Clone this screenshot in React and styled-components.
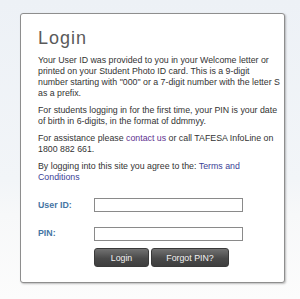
import React from "react";
import styled, { createGlobalStyle } from "styled-components";

const GlobalStyle = createGlobalStyle`
  html, body {
    margin: 0;
    padding: 0;
  }
  body {
    font-family: "Liberation Sans", Arial, sans-serif;
    background: #fff;
  }
`;

const Page = styled.div`
  width: 300px;
  height: 299px;
  box-sizing: border-box;
  padding: 13px 15px 0 20px;
  background: linear-gradient(#edf1f6 0, #f2f5f8 180px, #f7f8f9 215px, #fcfcfc 299px);
`;

const Card = styled.section`
  box-sizing: border-box;
  width: 265px;
  background: #fff;
  border: 1px solid #8e8e8e;
  border-radius: 3px;
  box-shadow: 1px 1px 2px rgba(0, 0, 0, 0.25);
  padding: 13px 4px 15px 17px;
`;

const Title = styled.h1`
  margin: 0 0 6px;
  font-size: 18px;
  line-height: 22px;
  font-weight: normal;
  letter-spacing: 1px;
  color: #5a5a5a;
`;

const Text = styled.p`
  margin: 0 0 6px;
  font-size: 8.8px;
  line-height: 11px;
  color: #333;
  white-space: nowrap;
`;

const Link = styled.a`
  color: ${p => (p.visited ? "#5e3290" : "#3b3f96")};
  text-decoration: none;
`;

const Form = styled.form`
  display: grid;
  grid-template-columns: 56px 149px;
  row-gap: 15px;
  align-items: center;
  padding-top: 9px;
`;

const Label = styled.label`
  font-size: 8.8px;
  font-weight: bold;
  color: #4474a3;
  align-self: ${p => (p.top ? "start" : "center")};
  padding-top: ${p => (p.top ? "1px" : "0")};
`;

const Input = styled.input`
  box-sizing: border-box;
  width: 149px;
  height: 14px;
  margin: 0;
  padding: 0 2px;
  border: 1px solid #8a8a8a;
  border-radius: 0;
  background: #fff;
  font-size: 9px;
`;

const Actions = styled.div`
  grid-column: 2;
  display: flex;
  gap: 2px;
  margin-top: -8px;
`;

const Button = styled.button`
  box-sizing: border-box;
  width: ${p => p.w}px;
  height: 19px;
  margin: 0;
  padding: 0;
  border: 1px solid #3a3a3a;
  border-radius: 3px;
  background: linear-gradient(#727272, #4a4a4a 55%, #3e3e3e);
  color: #f2f2f2;
  font-family: "Liberation Sans", Arial, sans-serif;
  font-size: 8.8px;
  cursor: pointer;
`;

export default function App() {
  return (
    <>
      <GlobalStyle />
      <Page>
        <Card>
          <Title>Login</Title>
          <Text>
            Your User ID was provided to you in your Welcome letter or
            <br />
            printed on your Student Photo ID card. This is a 9-digit
            <br />
            number starting with "000" or a 7-digit number with the letter S
            <br />
            as a prefix.
          </Text>
          <Text>
            For students logging in for the first time, your PIN is your date
            <br />
            of birth in 6-digits, in the format of ddmmyy.
          </Text>
          <Text>
            For assistance please <Link href="#" visited>contact us</Link> or
            call TAFESA InfoLine on
            <br />
            1800 882 661.
          </Text>
          <Text>
            By logging into this site you agree to the:{" "}
            <Link href="#">
              Terms and
              <br />
              Conditions
            </Link>
          </Text>
          <Form onSubmit={e => e.preventDefault()}>
            <Label htmlFor="uid">User ID:</Label>
            <Input id="uid" type="text" />
            <Label htmlFor="pin" top>PIN:</Label>
            <Input id="pin" type="password" />
            <Actions>
              <Button type="submit" w={55}>Login</Button>
              <Button type="button" w={78}>Forgot PIN?</Button>
            </Actions>
          </Form>
        </Card>
      </Page>
    </>
  );
}
